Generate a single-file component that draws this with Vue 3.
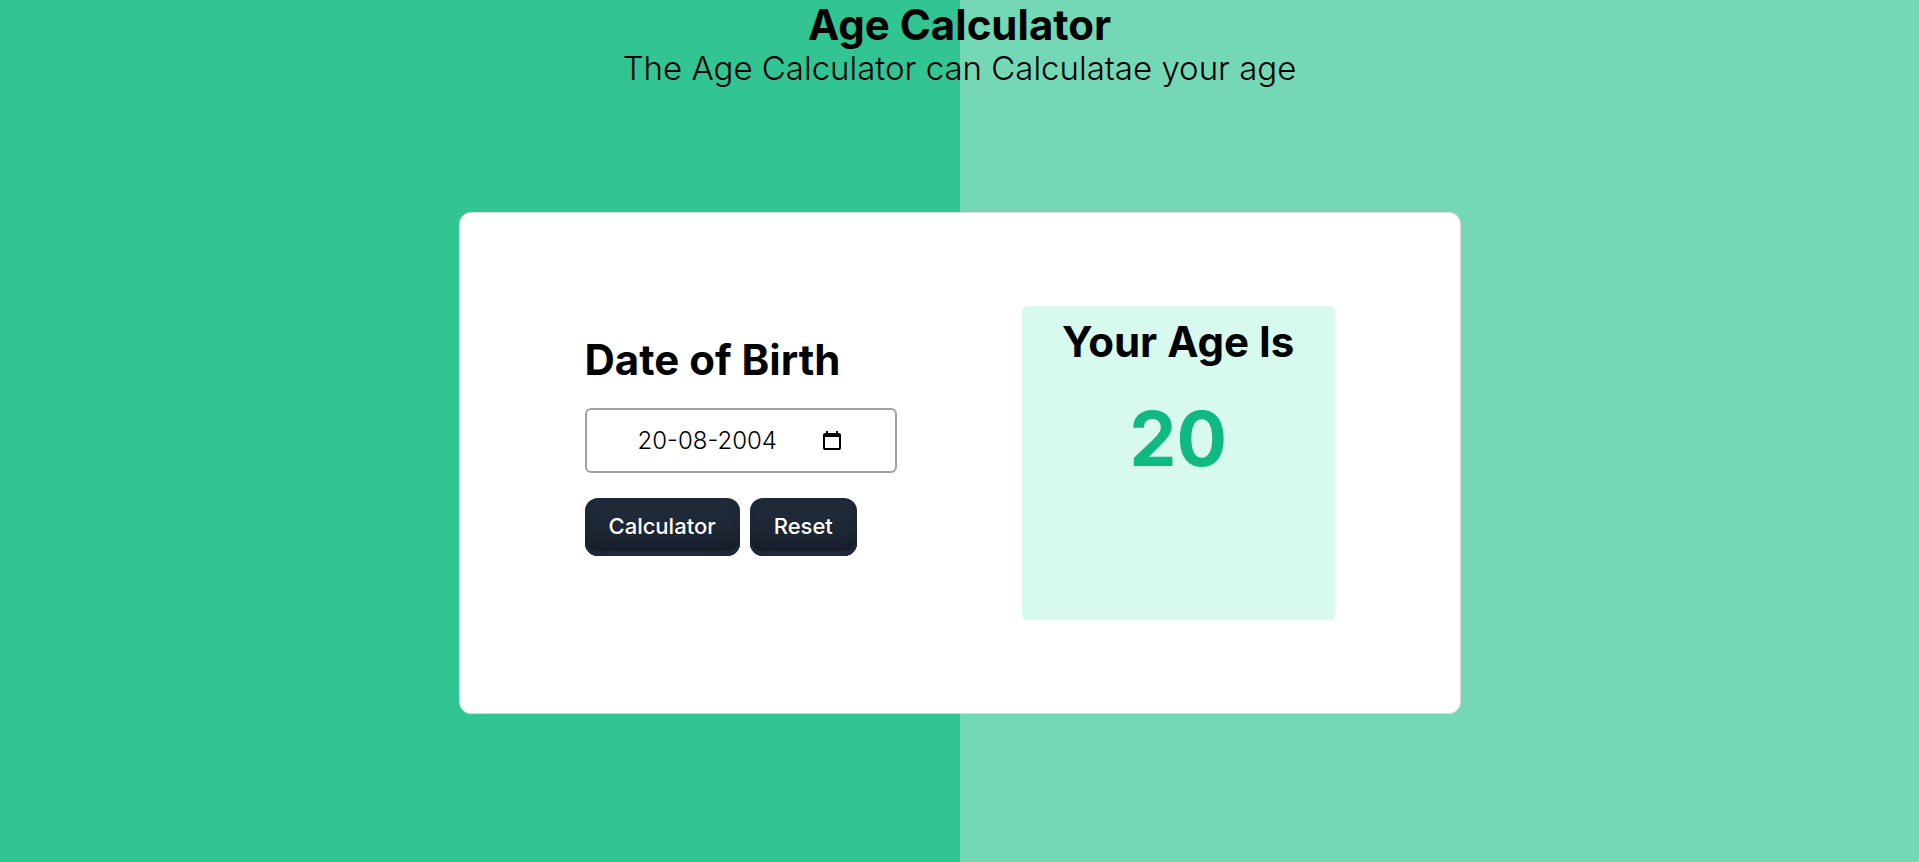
<script setup>
import { ref } from 'vue'

const birth = ref('20-08-2004')
const age = ref('20')

function calculate() {
  const [day, month, year] = birth.value.split('-').map(Number)
  const now = new Date()
  let years = now.getFullYear() - year
  if (now < new Date(now.getFullYear(), month - 1, day)) years -= 1
  age.value = Number.isNaN(years) ? '' : String(years)
}

function reset() {
  birth.value = ''
  age.value = ''
}
</script>

<template>
  <main class="page">
    <header class="intro">
      <h1>Age Calculator</h1>
      <p>The Age Calculator can Calculatae your age</p>
    </header>

    <section class="card">
      <form class="form" @submit.prevent="calculate">
        <label class="heading" for="birth">Date of Birth</label>
        <div class="field">
          <input id="birth" v-model="birth" type="text" />
          <button class="picker" type="button" aria-label="Open calendar">
            <svg width="18" height="20" viewBox="0 0 18 20">
              <path
                fill="#000"
                fill-rule="evenodd"
                d="M3 0h2v2h8V0h2v2h1a2 2 0 0 1 2 2v13a2 2 0 0 1-2 2H2a2 2 0 0 1-2-2V4a2 2 0 0 1 2-2h1zM2 6v11h14V6z"
              />
            </svg>
          </button>
        </div>
        <div class="actions">
          <button class="action" type="submit">Calculator</button>
          <button class="action" type="button" @click="reset">Reset</button>
        </div>
      </form>

      <div class="result">
        <h2 class="heading">Your Age Is</h2>
        <output class="age" for="birth">{{ age }}</output>
      </div>
    </section>
  </main>
</template>

<style>
body {
  margin: 0;
}
</style>

<style scoped>
.page {
  box-sizing: border-box;
  min-height: 100vh;
  padding-bottom: 64px;
  font-family: Inter, "Open Sans", sans-serif;
  color: #000;
  background: linear-gradient(90deg, #32c593 50%, #74d8b6 50%);
}

.intro {
  text-align: center;
}

h1,
h2,
p {
  margin: 0;
}

h1 {
  font-size: 42px;
  line-height: 50px;
  font-weight: 700;
}

.intro p {
  font-size: 33px;
  line-height: 36px;
  font-weight: 300;
}

.card {
  box-sizing: border-box;
  display: grid;
  grid-template-columns: 1fr 1fr;
  gap: 125px;
  align-items: center;
  max-width: 1002px;
  margin: 126px auto 0;
  padding: 93px 125px;
  background: #fff;
  border: 1px solid #d9d9d9;
  border-radius: 12px;
}

.form {
  display: flex;
  flex-direction: column;
  align-items: stretch;
  padding-bottom: 34px;
}

.heading {
  font-size: 42px;
  line-height: 48px;
  font-weight: 700;
}

.field {
  box-sizing: border-box;
  display: flex;
  align-items: center;
  justify-content: space-between;
  height: 65px;
  margin-top: 24px;
  padding: 0 54px 0 51px;
  border: 2px solid #a0a0a0;
  border-radius: 6px;
}

.field input {
  width: 160px;
  padding: 0;
  border: 0;
  outline: 0;
  background: transparent;
  color: #000;
  font: 300 24px/32px Inter, "Open Sans", sans-serif;
}

.picker {
  display: flex;
  padding: 0;
  border: 0;
  background: transparent;
}

.actions {
  display: flex;
  gap: 10px;
  margin-top: 25px;
}

.action {
  height: 58px;
  padding: 0 24px 2px;
  border: 0;
  border-radius: 13px;
  color: #fff;
  background: #1f2937;
  box-shadow: inset 0 -5px 0 #1f2937, inset 0 -28px 20px -14px #151c26;
  font: 500 22px/28px Inter, "Open Sans", sans-serif;
}

.result {
  box-sizing: border-box;
  display: flex;
  flex-direction: column;
  align-items: center;
  min-height: 314px;
  padding-top: 12px;
  text-align: center;
  background: #d8f9ed;
  border-radius: 6px;
}

.age {
  margin-top: 27px;
  font-size: 75px;
  line-height: 92px;
  font-weight: 700;
  color: #10b981;
}
</style>
